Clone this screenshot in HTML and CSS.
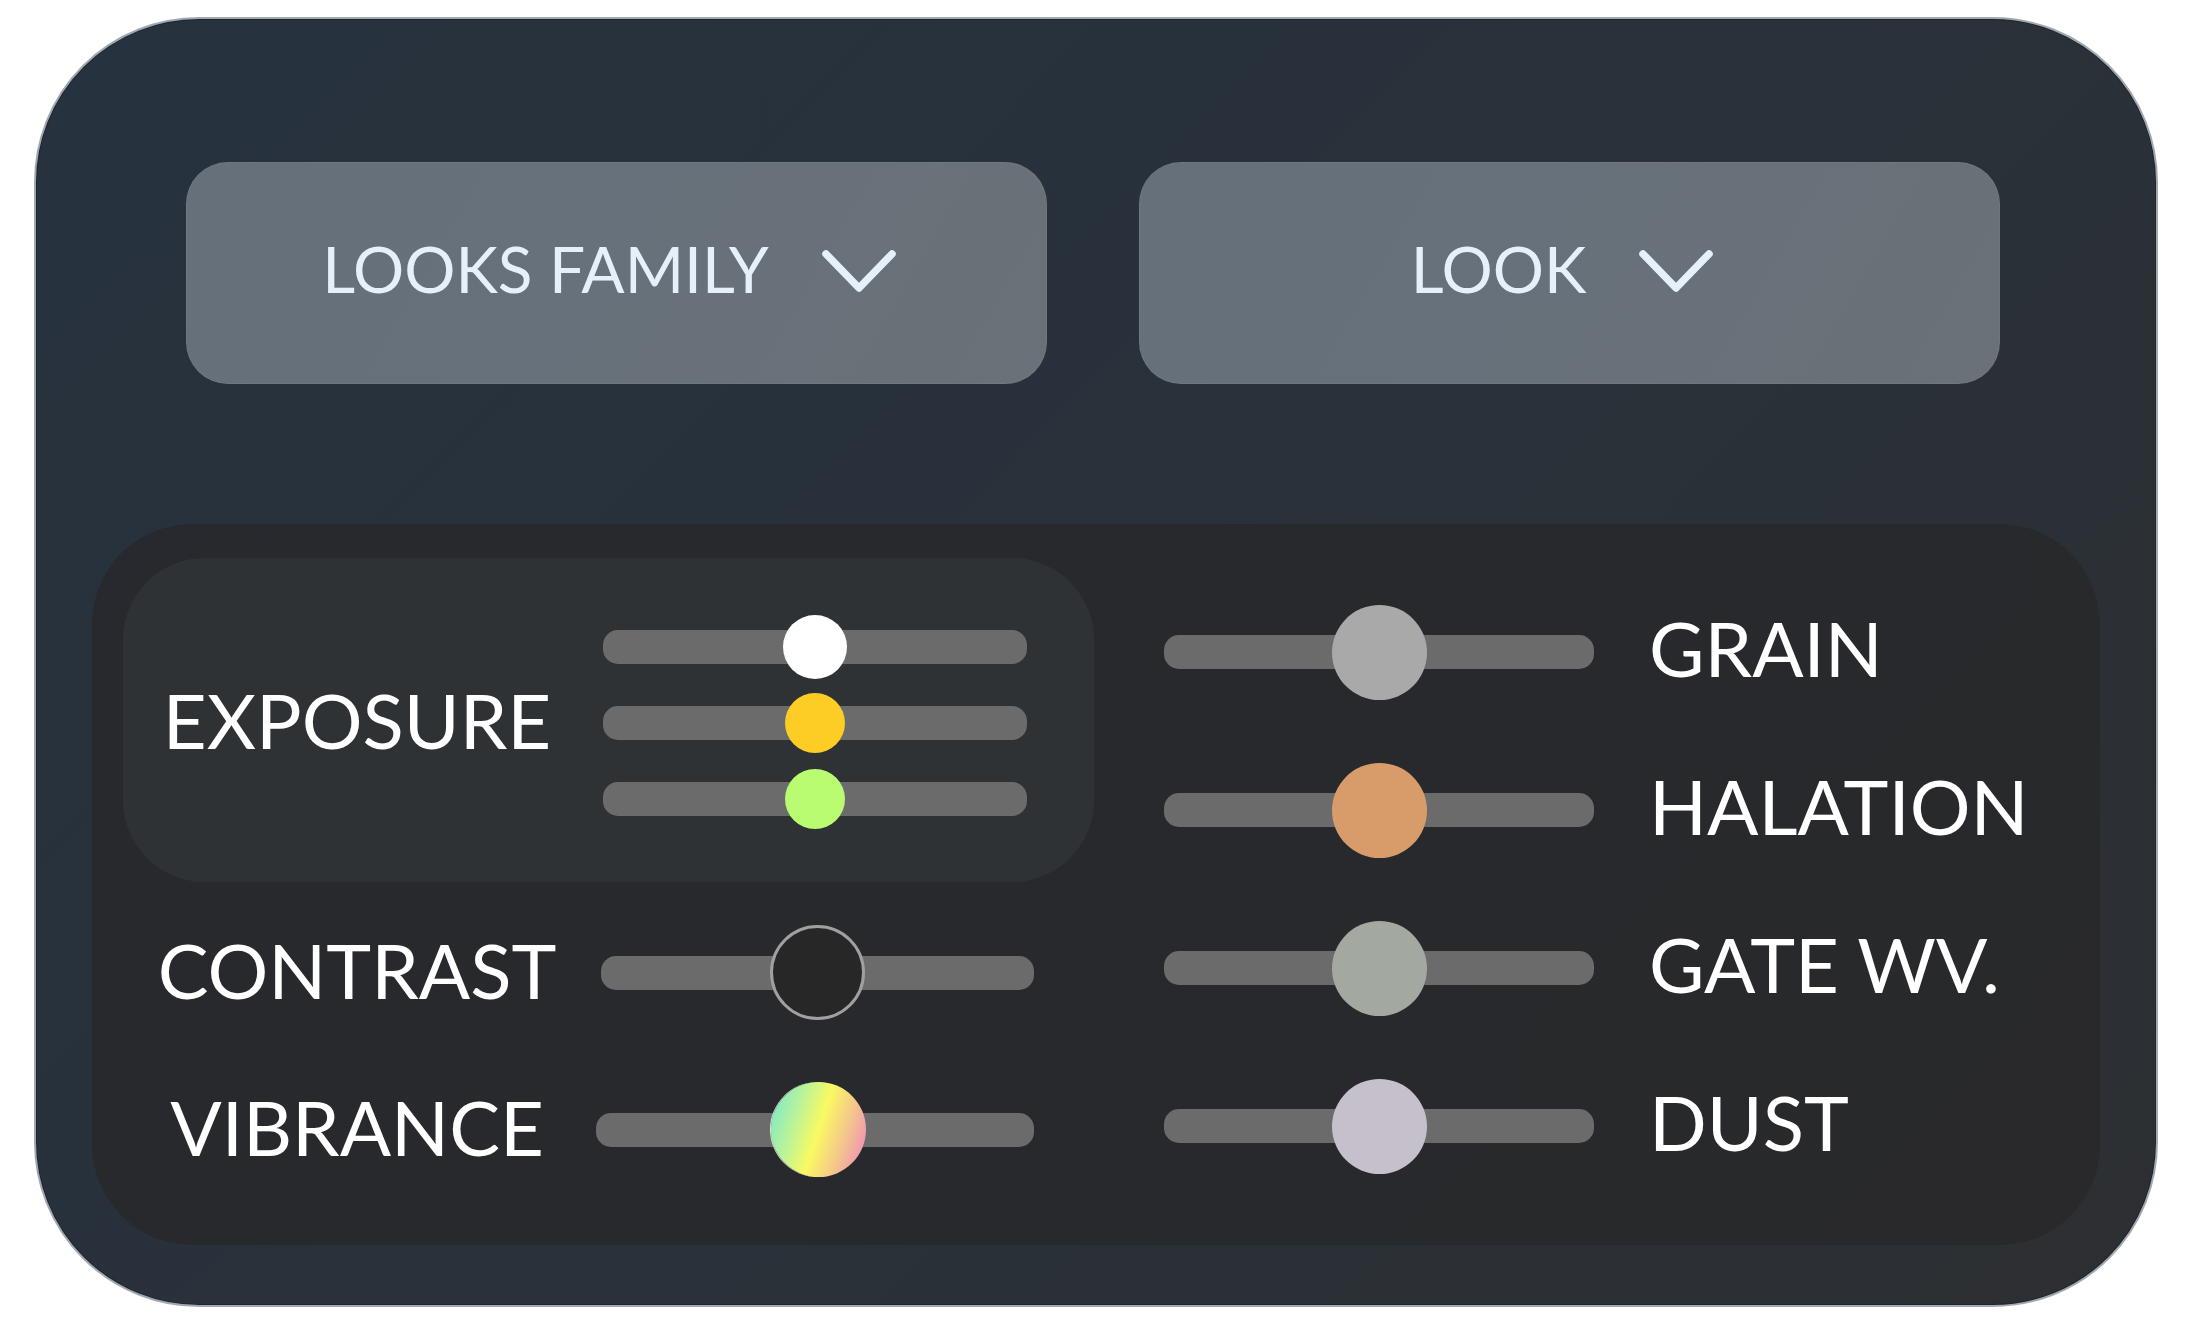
FILE: index.html
```html
<!DOCTYPE html>
<html lang="en">
<head>
<meta charset="utf-8">
<title>Looks</title>
<link rel="stylesheet" href="styles.css">
</head>
<body>
<div class="card">
  <div class="dropdowns">
    <button class="dropdown">
      <span class="dd-text">LOOKS FAMILY</span>
      <svg class="chev" width="76" height="44" viewBox="0 0 76 44"><path d="M5 5 L38 39 L71 5" fill="none" stroke="#e6f0fa" stroke-width="7.5" stroke-linecap="round" stroke-linejoin="round"/></svg>
    </button>
    <button class="dropdown">
      <span class="dd-text">LOOK</span>
      <svg class="chev" width="76" height="44" viewBox="0 0 76 44"><path d="M5 5 L38 39 L71 5" fill="none" stroke="#e6f0fa" stroke-width="7.5" stroke-linecap="round" stroke-linejoin="round"/></svg>
    </button>
  </div>

  <div class="panel">
    <div class="col-left">
      <div class="exposure">
        <div class="label">EXPOSURE</div>
        <div class="stack">
          <div class="slider small"><div class="track"></div><div class="knob k-white"></div></div>
          <div class="slider small"><div class="track"></div><div class="knob k-yellow"></div></div>
          <div class="slider small"><div class="track"></div><div class="knob k-green"></div></div>
        </div>
      </div>
      <div class="row-left first">
        <div class="label row">CONTRAST</div>
        <div class="slider wide"><div class="track"></div><div class="knob big k-contrast"></div></div>
      </div>
      <div class="row-left">
        <div class="label row">VIBRANCE</div>
        <div class="slider wide vib"><div class="track"></div><div class="knob big k-vibrance"></div></div>
      </div>
    </div>

    <div class="col-right">
      <div class="row-right">
        <div class="slider right"><div class="track"></div><div class="knob big k-grain"></div></div>
        <div class="rlabel">GRAIN</div>
      </div>
      <div class="row-right">
        <div class="slider right"><div class="track"></div><div class="knob big k-halation"></div></div>
        <div class="rlabel">HALATION</div>
      </div>
      <div class="row-right">
        <div class="slider right"><div class="track"></div><div class="knob big k-gate"></div></div>
        <div class="rlabel">GATE WV.</div>
      </div>
      <div class="row-right">
        <div class="slider right"><div class="track"></div><div class="knob big k-dust"></div></div>
        <div class="rlabel">DUST</div>
      </div>
    </div>
  </div>
</div>
</body>
</html>
```

FILE: styles.css
```css
* { box-sizing: border-box; }

html, body {
  margin: 0;
  padding: 0;
  background: #ffffff;
}

body {
  font-family: Lato, "Noto Sans", sans-serif;
  padding: 17px 0 0 34px;
}

.card {
  width: 2124px;
  height: 1290px;
  border: 2px solid #a0a9b2;
  border-radius: 165px;
  background: linear-gradient(135deg, #26323e 0%, #29313a 50%, #2d2f32 100%);
  padding: 143px 56px 0 56px;
  box-shadow: inset 0 0 0 1px #1f252b;
}

.dropdowns {
  display: flex;
  gap: 92px;
  padding-left: 94px;
}

.dropdown {
  width: 861px;
  height: 222px;
  border: 1px solid rgba(255, 255, 255, 0.05);
  border-radius: 42px;
  background: linear-gradient(120deg, #66707a 0%, #68717a 60%, #6a7177 100%);
  display: flex;
  align-items: center;
  justify-content: center;
  gap: 52px;
  padding: 0 14px 8px 0;
  font: inherit;
  cursor: pointer;
}

.dd-text {
  font-family: Lato, sans-serif;
  font-weight: 400;
  font-size: 64px;
  line-height: 1;
  color: #e6f0fa;
  letter-spacing: 0;
}

.chev {
  display: block;
  margin-top: 4px;
}

.panel {
  margin-top: 140px;
  width: 2008px;
  height: 721px;
  border-radius: 100px;
  background: linear-gradient(135deg, #27292e 0%, #27292c 60%, #29292b 100%);
  display: flex;
  padding: 34px 0 0 31px;
}

.col-left {
  width: 971px;
  display: flex;
  flex-direction: column;
}

.exposure {
  height: 324px;
  border-radius: 82px;
  background: linear-gradient(135deg, #2e3235 0%, #2f3234 100%);
  display: flex;
  align-items: center;
}

.label {
  width: 468px;
  text-align: center;
  color: #ffffff;
  font-size: 76px;
  font-weight: 400;
  line-height: 1;
}

.label.row {
  padding-bottom: 6px;
}

.stack {
  margin-left: 12px;
  width: 424px;
  display: flex;
  flex-direction: column;
  padding-top: 5px;
}

.slider {
  display: grid;
  place-items: center;
}

.slider > * {
  grid-area: 1 / 1;
}

.slider.small {
  height: 76px;
  width: 100%;
}

.track {
  width: 100%;
  height: 34px;
  border-radius: 15px;
  background: #6b6b6b;
}

.knob {
  width: 60px;
  height: 60px;
  border-radius: 50%;
}

.knob.big {
  width: 95px;
  height: 95px;
}

.k-white { width: 64px; height: 64px; background: #ffffff; }
.k-yellow { background: #fecd25; }
.k-green { background: #b9fc72; }

.k-contrast {
  background: #282728;
  border: 3.5px solid #a0a0a0;
}

.k-vibrance {
  margin-left: 6px;
  background: linear-gradient(108deg, #6ee8d2 0%, #b9f39a 28%, #f9fa62 50%, #f4c88a 72%, #ee7fc6 100%);
  box-shadow: -1px 0 0 0 rgba(255, 255, 255, 0.8);
}

.row-left {
  height: 157px;
  display: flex;
  align-items: center;
}

.row-left.first {
  margin-top: 12px;
}

.slider.wide {
  margin-left: 10px;
  width: 433px;
}

.slider.wide.vib {
  margin-left: 5px;
  width: 438px;
}

.col-right {
  margin-left: 70px;
  margin-top: 15px;
  display: flex;
  flex-direction: column;
}

.row-right {
  height: 158px;
  display: flex;
  align-items: center;
}

.slider.right {
  width: 430px;
}

.rlabel {
  margin-left: 55px;
  color: #ffffff;
  font-size: 76px;
  font-weight: 400;
  line-height: 1;
  padding-bottom: 8px;
}

.k-grain { background: #a9a9a9; }
.k-halation { background: #d89c6a; }
.k-gate { background: #a3a8a1; }
.k-dust { background: #c5c0cb; }
```
